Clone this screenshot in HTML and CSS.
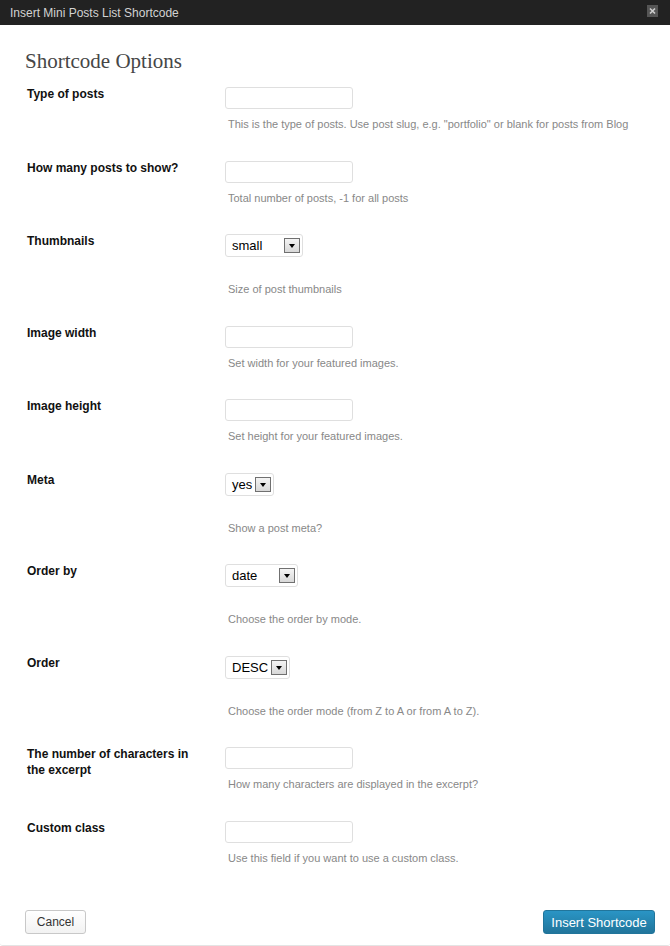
FILE: index.html
```html
<!DOCTYPE html>
<html>
<head>
<meta charset="utf-8">
<title>Insert Mini Posts List Shortcode</title>
<link rel="stylesheet" href="styles.css">
</head>
<body>
<div class="dialog">
  <div class="titlebar">
    <span class="title">Insert Mini Posts List Shortcode</span>
    <span class="close" aria-label="Close">
      <svg width="11" height="12" viewBox="0 0 11 12"><path d="M3 3.5 L8 8.5 M8 3.5 L3 8.5" stroke="#cfcfcf" stroke-width="1.6" fill="none"/></svg>
    </span>
  </div>
  <div class="content">
    <h2 class="heading">Shortcode Options</h2>

    <div class="row">
      <div class="label">Type of posts</div>
      <div class="field"><span class="input"></span><div class="desc">This is the type of posts. Use post slug, e.g. "portfolio" or blank for posts from Blog</div></div>
    </div>

    <div class="row">
      <div class="label">How many posts to show?</div>
      <div class="field"><span class="input"></span><div class="desc">Total number of posts, -1 for all posts</div></div>
    </div>

    <div class="row row-select">
      <div class="label">Thumbnails</div>
      <div class="field"><span class="select w-small"><span class="val">small</span><span class="btn"></span></span><div class="desc">Size of post thumbnails</div></div>
    </div>

    <div class="row">
      <div class="label">Image width</div>
      <div class="field"><span class="input"></span><div class="desc">Set width for your featured images.</div></div>
    </div>

    <div class="row">
      <div class="label">Image height</div>
      <div class="field"><span class="input"></span><div class="desc">Set height for your featured images.</div></div>
    </div>

    <div class="row row-select">
      <div class="label">Meta</div>
      <div class="field"><span class="select w-yes"><span class="val">yes</span><span class="btn"></span></span><div class="desc">Show a post meta?</div></div>
    </div>

    <div class="row row-select">
      <div class="label">Order by</div>
      <div class="field"><span class="select w-date"><span class="val">date</span><span class="btn"></span></span><div class="desc">Choose the order by mode.</div></div>
    </div>

    <div class="row row-select">
      <div class="label">Order</div>
      <div class="field"><span class="select w-desc"><span class="val">DESC</span><span class="btn"></span></span><div class="desc">Choose the order mode (from Z to A or from A to Z).</div></div>
    </div>

    <div class="row">
      <div class="label label-multi">The number of characters in the excerpt</div>
      <div class="field"><span class="input"></span><div class="desc">How many characters are displayed in the excerpt?</div></div>
    </div>

    <div class="row">
      <div class="label">Custom class</div>
      <div class="field"><span class="input"></span><div class="desc">Use this field if you want to use a custom class.</div></div>
    </div>

    <div class="footer">
      <button class="button cancel">Cancel</button>
      <button class="button primary">Insert Shortcode</button>
    </div>
  </div>
</div>
</body>
</html>
```

FILE: styles.css
```css
html, body {
  margin: 0;
  padding: 0;
  background: #ffffff;
}

body {
  font-family: "Liberation Sans", Arial, sans-serif;
  color: #222;
}

.dialog {
  width: 670px;
  height: 946px;
  display: flex;
  flex-direction: column;
  box-sizing: border-box;
  border-bottom: 1px solid #e4e4e4;
  border-radius: 0 0 3px 3px;
}

.titlebar {
  height: 25px;
  background: #222222;
  display: flex;
  align-items: center;
  justify-content: space-between;
  padding: 0 12px 0 10px;
  flex-shrink: 0;
}

.title {
  color: #d2d2d2;
  font-size: 12px;
  line-height: 14px;
}

.close {
  width: 11px;
  height: 12px;
  background: #555555;
  display: flex;
  margin-top: -3px;
}

.close svg {
  display: block;
}

.content {
  padding: 0 15px 0 25px;
}

.heading {
  margin: 24px 0 14px 0;
  font-family: "Liberation Serif", Georgia, serif;
  font-weight: normal;
  font-size: 21px;
  line-height: 24px;
  color: #464646;
}

.row {
  display: grid;
  grid-template-columns: 198px 1fr;
  padding: 0 0 29.5px 2px;
}

.label {
  font-weight: bold;
  font-size: 12px;
  line-height: 14px;
  color: #111;
  width: 180px;
}

.label-multi {
  line-height: 16px;
  margin-top: -1px;
}

.field {
  display: flex;
  flex-direction: column;
  align-items: flex-start;
}

.input {
  display: block;
  width: 128px;
  height: 22px;
  box-sizing: border-box;
  border: 1px solid #dfdfdf;
  border-radius: 3px;
  background: #fff;
}

.select {
  display: flex;
  align-items: center;
  justify-content: space-between;
  height: 23px;
  box-sizing: border-box;
  border: 1px solid #dfdfdf;
  border-radius: 3px;
  background: #fff;
  padding: 0 2px 0 6px;
}

.w-small { width: 78px; }
.w-yes { width: 49px; }
.w-date { width: 73px; }
.w-desc { width: 65px; }

.val {
  font-size: 13px;
  line-height: 15px;
  color: #000;
}

.btn {
  width: 16px;
  height: 15px;
  box-sizing: border-box;
  border: 1px solid #707070;
  background: linear-gradient(#f4f4f4, #d8d8d8);
  position: relative;
  flex-shrink: 0;
}

.btn::after {
  content: "";
  position: absolute;
  left: 4px;
  top: 5px;
  border-left: 3.5px solid transparent;
  border-right: 3.5px solid transparent;
  border-top: 4px solid #000;
}

.desc {
  margin-top: 8px;
  padding-left: 3px;
  font-size: 11px;
  line-height: 14px;
  color: #888888;
}

.row-select .desc {
  margin-top: 25px;
}

.footer {
  display: flex;
  justify-content: space-between;
  align-items: center;
  margin-top: 16px;
}

.button {
  font-family: "Liberation Sans", Arial, sans-serif;
  font-size: 12px;
  box-sizing: border-box;
  border-radius: 3px;
  margin: 0;
  cursor: pointer;
}

.cancel {
  width: 61px;
  height: 24px;
  border: 1px solid #c8c8c8;
  background: linear-gradient(#ffffff, #f2f2f2);
  color: #333;
}

.primary {
  width: 112px;
  height: 24px;
  border: 1px solid #21759b;
  background: linear-gradient(#2a95c5, #21759b);
  color: #ffffff;
  font-size: 13px;
}
```
